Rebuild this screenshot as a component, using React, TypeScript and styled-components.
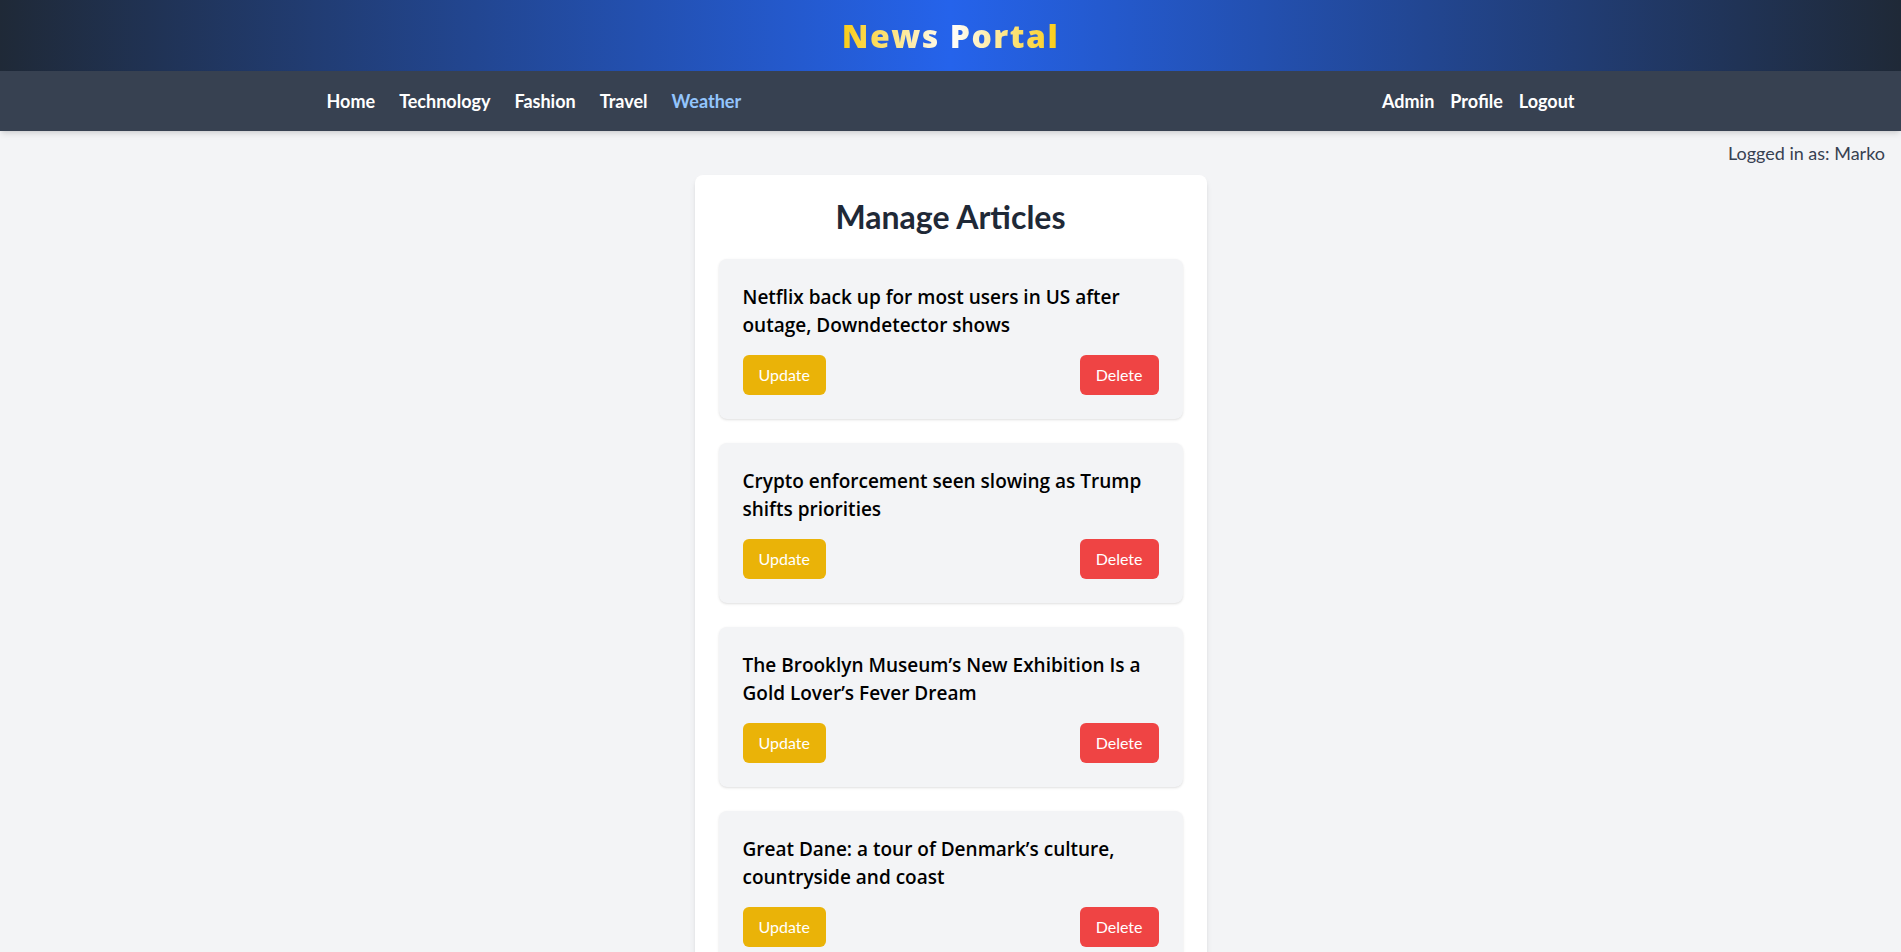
import React from 'react';
import styled, { createGlobalStyle } from 'styled-components';

const GlobalStyle = createGlobalStyle`
  html {
    scrollbar-width: none;
  }
  body {
    margin: 0;
    background: #f3f4f6;
    font-family: Lato, "Noto Sans", sans-serif;
    color: #111827;
  }
  * {
    box-sizing: border-box;
  }
`;

const Header = styled.header`
  background: linear-gradient(to right, #1f2937, #2563eb, #1f2937);
  padding: 16px 0;
  text-align: center;
`;

const Title = styled.h1`
  display: inline-block;
  margin: 0;
  font-family: "Open Sans", Lato, sans-serif;
  font-size: 32px;
  line-height: 39px;
  font-weight: 800;
  letter-spacing: 1.5px;
  background: linear-gradient(to right, #facc15, #ffffff, #facc15);
  -webkit-background-clip: text;
  background-clip: text;
  color: transparent;
`;

const Nav = styled.nav`
  position: relative;
  z-index: 1;
  background: #374151;
  box-shadow: 0 4px 6px -1px rgba(0, 0, 0, 0.1), 0 2px 4px -2px rgba(0, 0, 0, 0.1);
`;

const NavInner = styled.div`
  max-width: 1280px;
  margin: 0 auto;
  padding: 16px;
  display: flex;
  justify-content: space-between;
  align-items: center;
`;

const NavGroup = styled.ul<{ $gap: number }>`
  display: flex;
  gap: ${(p) => p.$gap}px;
  margin: 0;
  padding: 0;
  list-style: none;
`;

const NavLink = styled.a<{ $active?: boolean }>`
  display: block;
  font-size: 18px;
  line-height: 28px;
  font-weight: 700;
  color: ${(p) => (p.$active ? '#93c5fd' : '#ffffff')};
  text-decoration: none;
  cursor: pointer;
`;

const UserBar = styled.div`
  padding: 8px 16px;
  text-align: right;
  font-size: 18px;
  line-height: 28px;
  color: #374151;
`;

const Panel = styled.main`
  max-width: 512px;
  margin: 0 auto;
  background: #ffffff;
  padding: 24px;
  border-radius: 8px;
  box-shadow: 0 4px 6px -1px rgba(0, 0, 0, 0.1), 0 2px 4px -2px rgba(0, 0, 0, 0.1);
`;

const PanelTitle = styled.h2`
  margin: 0 0 24px;
  text-align: center;
  font-size: 32px;
  line-height: 36px;
  font-weight: 700;
  color: #1f2937;
`;

const ArticleList = styled.ul`
  display: flex;
  flex-direction: column;
  gap: 24px;
  margin: 0;
  padding: 0;
  list-style: none;
`;

const ArticleCard = styled.li`
  background: #f3f4f6;
  padding: 24px;
  border-radius: 8px;
  box-shadow: 0 1px 3px 0 rgba(0, 0, 0, 0.1), 0 1px 2px -1px rgba(0, 0, 0, 0.1);
`;

const ArticleTitle = styled.h3`
  margin: 0 0 16px;
  font-family: "Open Sans", Lato, sans-serif;
  font-size: 19px;
  line-height: 28px;
  font-weight: 600;
  color: #000000;
`;

const Actions = styled.div`
  display: flex;
  justify-content: space-between;
`;

const ActionButton = styled.button<{ $variant: 'update' | 'delete' }>`
  padding: 8px 16px;
  border: none;
  border-radius: 6px;
  background: ${(p) => (p.$variant === 'update' ? '#eab308' : '#ef4444')};
  color: #ffffff;
  font-family: inherit;
  font-size: 16px;
  line-height: 24px;
  cursor: pointer;
`;

const articles = [
  'Netflix back up for most users in US after outage, Downdetector shows',
  'Crypto enforcement seen slowing as Trump shifts priorities',
  'The Brooklyn Museum\u2019s New Exhibition Is a Gold Lover\u2019s Fever Dream',
  'Great Dane: a tour of Denmark\u2019s culture, countryside and coast',
];

function App() {
  return (
    <>
      <GlobalStyle />
      <Header>
        <Title>News Portal</Title>
      </Header>
      <Nav>
        <NavInner>
          <NavGroup $gap={24}>
            <li><NavLink>Home</NavLink></li>
            <li><NavLink>Technology</NavLink></li>
            <li><NavLink>Fashion</NavLink></li>
            <li><NavLink>Travel</NavLink></li>
            <li><NavLink $active>Weather</NavLink></li>
          </NavGroup>
          <NavGroup $gap={16}>
            <li><NavLink>Admin</NavLink></li>
            <li><NavLink>Profile</NavLink></li>
            <li><NavLink>Logout</NavLink></li>
          </NavGroup>
        </NavInner>
      </Nav>
      <UserBar>Logged in as: Marko</UserBar>
      <Panel>
        <PanelTitle>Manage Articles</PanelTitle>
        <ArticleList>
          {articles.map((title) => (
            <ArticleCard key={title}>
              <ArticleTitle>{title}</ArticleTitle>
              <Actions>
                <ActionButton $variant="update">Update</ActionButton>
                <ActionButton $variant="delete">Delete</ActionButton>
              </Actions>
            </ArticleCard>
          ))}
        </ArticleList>
      </Panel>
    </>
  );
}

export default App;
